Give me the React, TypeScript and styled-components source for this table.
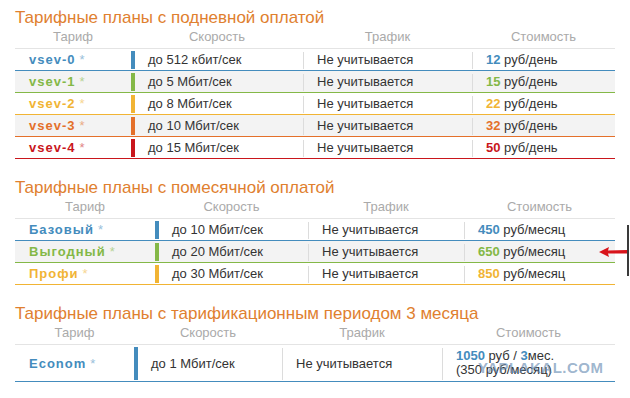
import React from 'react';
import styled, { createGlobalStyle } from 'styled-components';

const GlobalStyle = createGlobalStyle`
    html, body {
        margin: 0;
        padding: 0;
        background: #fff;
    }
    body {
        font-family: "Liberation Sans", Arial, sans-serif;
        font-size: 13px;
        color: #333;
    }
`;

const COLORS = {
    blue: '#448cbd',
    green: '#84b847',
    yellow: '#f1b434',
    orange: '#e4702a',
    red: '#c9161c',
};

interface Plan {
    name: string;
    color: string;
    speed: string;
    price: React.ReactNode;
}

const Page = styled.div`
    position: relative;
    width: 630px;
    height: 398px;
    padding: 8px 0 0 15px;
    box-sizing: border-box;
    overflow: hidden;
`;

const Section = styled.section`
    width: 600px;

    & + & {
        margin-top: 19px;
    }
`;

const Title = styled.h2`
    margin: 0;
    height: 20px;
    font-size: 17px;
    line-height: 20px;
    font-weight: normal;
    color: #e0802f;
`;

const HeaderRow = styled.div<{ $cols: string }>`
    display: grid;
    grid-template-columns: ${p => p.$cols};
    height: 18px;
    padding-bottom: 2px;
    border-bottom: 1px solid #e4e4e4;
`;

const HeaderCell = styled.div`
    text-align: center;
    line-height: 18px;
    color: #aaa;
`;

const Row = styled.div<{ $cols: string; $accent: string; $shaded?: boolean; $tall?: boolean }>`
    display: grid;
    grid-template-columns: ${p => p.$cols};
    height: ${p => (p.$tall ? 36 : 21)}px;
    border-bottom: 1px solid ${p => p.$accent};
    background: ${p => (p.$shaded ? '#f3f3f3' : '#fff')};
`;

const Cell = styled.div`
    display: flex;
    align-items: center;
    min-width: 0;
    white-space: nowrap;
`;

const NameCell = styled(Cell)<{ $color: string }>`
    padding-left: 14px;
    color: ${p => p.$color};
`;

const Name = styled.span`
    font-weight: bold;
    letter-spacing: 1px;
`;

const Star = styled.span`
    margin-left: 4px;
    opacity: 0.55;
`;

const Bar = styled.span<{ $color: string }>`
    align-self: stretch;
    width: 4px;
    margin: 2px 13px 1px 0;
    background: ${p => p.$color};
`;

const Divider = styled.span`
    align-self: stretch;
    width: 1px;
    margin: 3px 13px 1px 0;
    background: #dcdcdc;
`;

const Num = styled.b<{ $color: string }>`
    color: ${p => p.$color};
`;

const TwoLines = styled.span`
    line-height: 14px;
    white-space: nowrap;
`;

const Arrow = styled.svg`
    position: absolute;
    left: 598px;
    top: 246px;
`;

const EdgeLine = styled.span`
    position: absolute;
    left: 627px;
    top: 225px;
    width: 2px;
    height: 51px;
    background: #3a3a3a;
`;

// watermark stamped over the bottom-right price cell
const Watermark = styled.span`
    position: absolute;
    left: 478px;
    top: 359px;
    font-size: 15px;
    font-weight: bold;
    letter-spacing: 0.5px;
    color: rgba(95, 135, 175, 0.62);
`;

const HEADERS = ['Тариф', 'Скорость', 'Трафик', 'Стоимость'];

const Table: React.FC<{ cols: string; plans: Plan[]; tall?: boolean }> = ({ cols, plans, tall }) => (
    <>
        <HeaderRow $cols={cols}>
            {HEADERS.map(h => (
                <HeaderCell key={h}>{h}</HeaderCell>
            ))}
        </HeaderRow>
        {plans.map((plan, i) => (
            <Row key={plan.name} $cols={cols} $accent={plan.color} $shaded={i % 2 === 1} $tall={tall}>
                <NameCell $color={plan.color}>
                    <Name>{plan.name}</Name>
                    <Star>*</Star>
                </NameCell>
                <Cell>
                    <Bar $color={plan.color} />
                    {plan.speed}
                </Cell>
                <Cell>
                    <Divider />
                    Не учитывается
                </Cell>
                <Cell>
                    <Divider />
                    {plan.price}
                </Cell>
            </Row>
        ))}
    </>
);

const perDay = (value: string, color: string) => (
    <span>
        <Num $color={color}>{value}</Num> руб/день
    </span>
);

const perMonth = (value: string, color: string) => (
    <span>
        <Num $color={color}>{value}</Num> руб/месяц
    </span>
);

const dailyPlans: Plan[] = [
    { name: 'vsev-0', color: COLORS.blue, speed: 'до 512 кбит/сек', price: perDay('12', COLORS.blue) },
    { name: 'vsev-1', color: COLORS.green, speed: 'до 5 Мбит/сек', price: perDay('15', COLORS.green) },
    { name: 'vsev-2', color: COLORS.yellow, speed: 'до 8 Мбит/сек', price: perDay('22', COLORS.yellow) },
    { name: 'vsev-3', color: COLORS.orange, speed: 'до 10 Мбит/сек', price: perDay('32', COLORS.orange) },
    { name: 'vsev-4', color: COLORS.red, speed: 'до 15 Мбит/сек', price: perDay('50', COLORS.red) },
];

const monthlyPlans: Plan[] = [
    { name: 'Базовый', color: COLORS.blue, speed: 'до 10 Мбит/сек', price: perMonth('450', COLORS.blue) },
    { name: 'Выгодный', color: COLORS.green, speed: 'до 20 Мбит/сек', price: perMonth('650', COLORS.green) },
    { name: 'Профи', color: COLORS.yellow, speed: 'до 30 Мбит/сек', price: perMonth('850', COLORS.yellow) },
];

const quarterPlans: Plan[] = [
    {
        name: 'Econom',
        color: COLORS.blue,
        speed: 'до 1 Мбит/сек',
        price: (
            <TwoLines>
                <Num $color={COLORS.blue}>1050</Num> руб / <Num $color={COLORS.blue}>3</Num>мес.
                <br />
                (350 руб/месяц)
            </TwoLines>
        ),
    },
];

export default function App() {
    return (
        <Page>
            <GlobalStyle />
            <Section>
                <Title>Тарифные планы с подневной оплатой</Title>
                <Table cols="116px 172px 169px 143px" plans={dailyPlans} />
            </Section>
            <Section>
                <Title>Тарифные планы с помесячной оплатой</Title>
                <Table cols="140px 153px 156px 151px" plans={monthlyPlans} />
            </Section>
            <Section>
                <Title>Тарифные планы с тарификационным периодом 3 месяца</Title>
                <Table cols="119px 148px 160px 173px" plans={quarterPlans} tall />
            </Section>

            <Arrow width="30" height="12" viewBox="0 0 30 12">
                <path d="M1 6 L11 1 L10 4.5 L29 4 L29 7.5 L10 7.5 L11 11 Z" fill="#d8141b" />
            </Arrow>
            <EdgeLine />
            <Watermark>YAPLAKAL.COM</Watermark>
        </Page>
    );
}
